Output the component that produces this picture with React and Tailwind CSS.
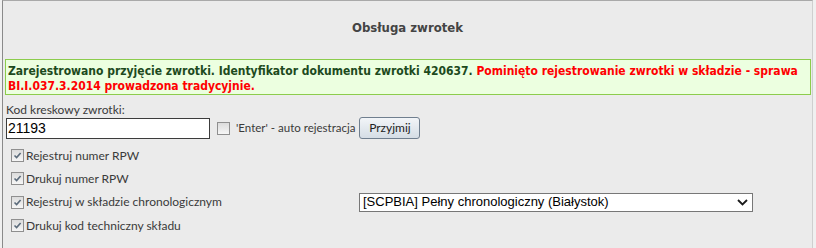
import React, { useState } from 'react';

const Check = ({ checked, onChange }) => (
    <span
        onClick={onChange}
        className="w-[13px] h-[13px] border border-[#8f8f8f] bg-gradient-to-b from-[#dcdcdc] to-[#f6f6f6] flex items-center justify-center shrink-0"
    >
        {checked && (
            <svg width="9" height="9" viewBox="0 0 9 9">
                <path d="M1.5 4.5 L3.6 6.6 L7.6 2" fill="none" stroke="#5b6b7b" strokeWidth="1.6" />
            </svg>
        )}
    </span>
);

const App = () => {
    const [code, setCode] = useState('21193');
    const [auto, setAuto] = useState(false);
    const [opts, setOpts] = useState({ rpw: true, printRpw: true, chrono: true, printCode: true });
    const toggle = (k) => setOpts({ ...opts, [k]: !opts[k] });

    const rows = [
        { k: 'rpw', label: 'Rejestruj numer RPW' },
        { k: 'printRpw', label: 'Drukuj numer RPW' },
        { k: 'chrono', label: 'Rejestruj w składzie chronologicznym' },
        { k: 'printCode', label: 'Drukuj kod techniczny składu' },
    ];

    return (
        <div className="w-[816px] h-[248px] bg-[#f0f0f0] flex overflow-hidden">
            <div className="w-[2px] shrink-0" />
            <div className="w-[811px] h-[248px] bg-[#ebebeb] border-t border-l border-r border-t-[#a9a9a9] border-l-[#8a8a8a] border-r-[#cfcfcf] flex flex-col">
                {/* Title */}
                <div className="h-[51px] pt-[17px] text-center text-[13px] font-bold text-[#444] font-['DejaVu_Sans_Condensed','DejaVu_Sans',sans-serif]">
                    Obsługa zwrotek
                </div>

                {/* Message */}
                <div className="ml-[2px] mr-[1px] mt-[7px] h-[36px] border border-[#8ccc4c] bg-[#ecffe0] px-[2px] pt-[4px] text-[12px] leading-[15px] font-bold font-['DejaVu_Sans_Condensed','DejaVu_Sans',sans-serif] whitespace-nowrap">
                    <span className="text-[#1d4a1d]">Zarejestrowano przyjęcie zwrotki. Identyfikator dokumentu zwrotki 420637. </span>
                    <span className="text-[#ff0000]">Pominięto rejestrowanie zwrotki w składzie - sprawa<br />BI.I.037.3.2014 prowadzona tradycyjnie.</span>
                </div>

                {/* Barcode */}
                <div className="ml-[3px] mt-[7px] text-[12px] leading-[15px] text-[#3a3a3a] font-['Lato',sans-serif]">
                    Kod kreskowy zwrotki:
                </div>
                <div className="ml-[3px] flex items-center">
                    <input
                        value={code}
                        onChange={(e) => setCode(e.target.value)}
                        className="w-[204px] h-[21px] border border-[#3c3c3c] bg-white px-[1px] text-[14px] text-black outline-none font-['Liberation_Sans',Arial,sans-serif]"
                    />
                    <div className="ml-[7px]">
                        <Check checked={auto} onChange={() => setAuto(!auto)} />
                    </div>
                    <span className="ml-[6px] text-[11.5px] text-[#3a3a3a] font-['Lato',sans-serif]">'Enter' - auto rejestracja</span>
                    <button className="ml-[4px] w-[61px] h-[22px] rounded-[3px] border border-[#707f8f] bg-gradient-to-b from-[#f2f5f8] to-[#d5dde5] text-[12px] text-[#222] font-['Lato',sans-serif]">
                        Przyjmij
                    </button>
                </div>

                {/* Options */}
                <div className="mt-[5px] ml-[8px] flex flex-col">
                    {rows.map((r) => (
                        <div key={r.k} className="h-[23.3px] flex items-center">
                            <Check checked={opts[r.k]} onChange={() => toggle(r.k)} />
                            <span className="ml-[2px] text-[12px] text-[#3a3a3a] font-['Lato',sans-serif] w-[333px]">{r.label}</span>
                            {r.k === 'chrono' && (
                                <div className="w-[394px] h-[19px] border border-[#777] bg-white flex items-center justify-between pl-[3px] pr-[4px] text-[13px] text-black font-['Liberation_Sans',Arial,sans-serif]">
                                    <span>[SCPBIA] Pełny chronologiczny (Białystok)</span>
                                    <svg width="11" height="7" viewBox="0 0 11 7">
                                        <path d="M1 1 L5.5 5.5 L10 1" fill="none" stroke="#1a1a1a" strokeWidth="1.8" />
                                    </svg>
                                </div>
                            )}
                        </div>
                    ))}
                </div>
            </div>
        </div>
    );
};

export default App;
